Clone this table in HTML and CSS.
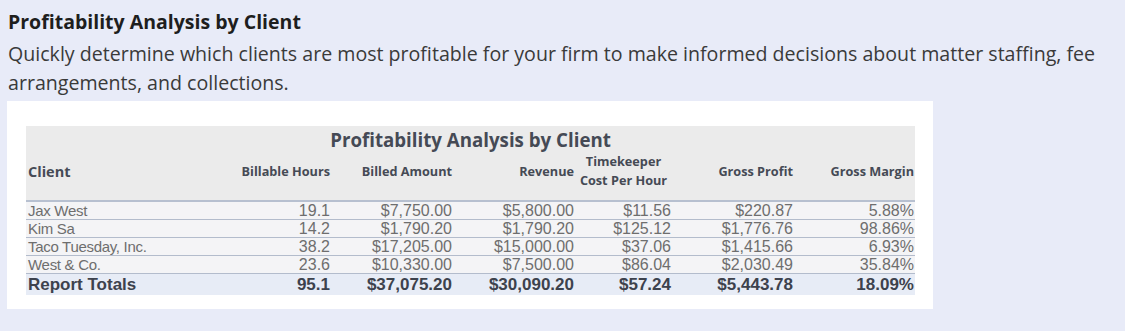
FILE: index.html
```html
<!DOCTYPE html>
<html>
<head>
<meta charset="utf-8">
<link rel="stylesheet" href="styles.css">
</head>
<body>
<div class="page">
  <h1 class="heading">Profitability Analysis by Client</h1>
  <p class="desc">Quickly determine which clients are most profitable for your firm to make informed decisions about matter staffing, fee arrangements, and collections.</p>
  <div class="panel">
    <table class="report">
      <colgroup>
        <col class="c-client"><col class="c-w122"><col class="c-w122"><col class="c-w122"><col class="c-w97"><col class="c-w122"><col class="c-w121">
      </colgroup>
      <thead>
        <tr class="title-row"><th colspan="7" class="report-title">Profitability Analysis by Client</th></tr>
        <tr class="label-row">
          <th class="lbl lbl-client">Client</th>
          <th class="lbl num">Billable Hours</th>
          <th class="lbl num">Billed Amount</th>
          <th class="lbl num">Revenue</th>
          <th class="lbl center">Timekeeper<br>Cost Per Hour</th>
          <th class="lbl num">Gross Profit</th>
          <th class="lbl num">Gross Margin</th>
        </tr>
      </thead>
      <tbody>
        <tr class="data"><td class="name">Jax West</td><td class="num">19.1</td><td class="num">$7,750.00</td><td class="num">$5,800.00</td><td class="num">$11.56</td><td class="num">$220.87</td><td class="num">5.88%</td></tr>
        <tr class="data"><td class="name">Kim Sa</td><td class="num">14.2</td><td class="num">$1,790.20</td><td class="num">$1,790.20</td><td class="num">$125.12</td><td class="num">$1,776.76</td><td class="num">98.86%</td></tr>
        <tr class="data"><td class="name">Taco Tuesday, Inc.</td><td class="num">38.2</td><td class="num">$17,205.00</td><td class="num">$15,000.00</td><td class="num">$37.06</td><td class="num">$1,415.66</td><td class="num">6.93%</td></tr>
        <tr class="data"><td class="name">West &amp; Co.</td><td class="num">23.6</td><td class="num">$10,330.00</td><td class="num">$7,500.00</td><td class="num">$86.04</td><td class="num">$2,030.49</td><td class="num">35.84%</td></tr>
        <tr class="totals"><td class="name">Report Totals</td><td class="num">95.1</td><td class="num">$37,075.20</td><td class="num">$30,090.20</td><td class="num">$57.24</td><td class="num">$5,443.78</td><td class="num">18.09%</td></tr>
      </tbody>
    </table>
  </div>
</div>
</body>
</html>
```
FILE: styles.css
```css
html, body {
  margin: 0;
  padding: 0;
  background: #e8ebf8;
}
.page {
  padding: 9px 0 0 8px;
  font-family: "Open Sans", "Noto Sans", sans-serif;
}
.heading {
  margin: 0;
  font-size: 19.5px;
  font-weight: 700;
  line-height: 26px;
  color: #1e1e1e;
}
.desc {
  margin: 4px 0 0 0;
  font-size: 19.6px;
  line-height: 29px;
  color: #3a3a3a;
  width: 1115px;
}
.panel {
  margin: 4px 0 0 -1px;
  width: 926px;
  box-sizing: border-box;
  background: #ffffff;
  padding: 25px 18px 14px 19px;
}
.report {
  width: 889px;
  border-collapse: collapse;
  table-layout: fixed;
}
.c-client { width: 183px; }
.c-w122 { width: 122px; }
.c-w97 { width: 97px; }
.c-w121 { width: 121px; }
thead th {
  background: #ebebeb;
  padding: 0;
  font-family: "Open Sans", "Noto Sans", sans-serif;
  color: #454a55;
}
.report-title {
  height: 26px;
  font-size: 18.7px;
  font-weight: 700;
  text-align: center;
  vertical-align: bottom;
  line-height: 24px;
}
.label-row th {
  height: 38px;
  padding-bottom: 10px;
  border-bottom: 2px solid #b7c0d0;
  vertical-align: middle;
}
.lbl {
  font-size: 12.7px;
  font-weight: 700;
  line-height: 19px;
}
.lbl-client {
  text-align: left;
  padding-left: 2px !important;
  font-size: 14.5px;
}
.num { text-align: right; padding-right: 1px; }
.center { text-align: center; }
tbody td {
  padding: 0 1px 0 2px;
  font-family: "Liberation Sans", Arial, sans-serif;
  white-space: nowrap;
  overflow: visible;
}
.data td {
  height: 17px;
  line-height: 17px;
  font-size: 16px;
  color: #6e6e6e;
  background: #f4f4f6;
  border-bottom: 1px solid #b3bccc;
}
.data .name { font-size: 15px; letter-spacing: -0.3px; }
.totals td {
  height: 21px;
  line-height: 21px;
  font-size: 17px;
  font-weight: 700;
  color: #3d424d;
  background: #e7ecf6;
}
```
